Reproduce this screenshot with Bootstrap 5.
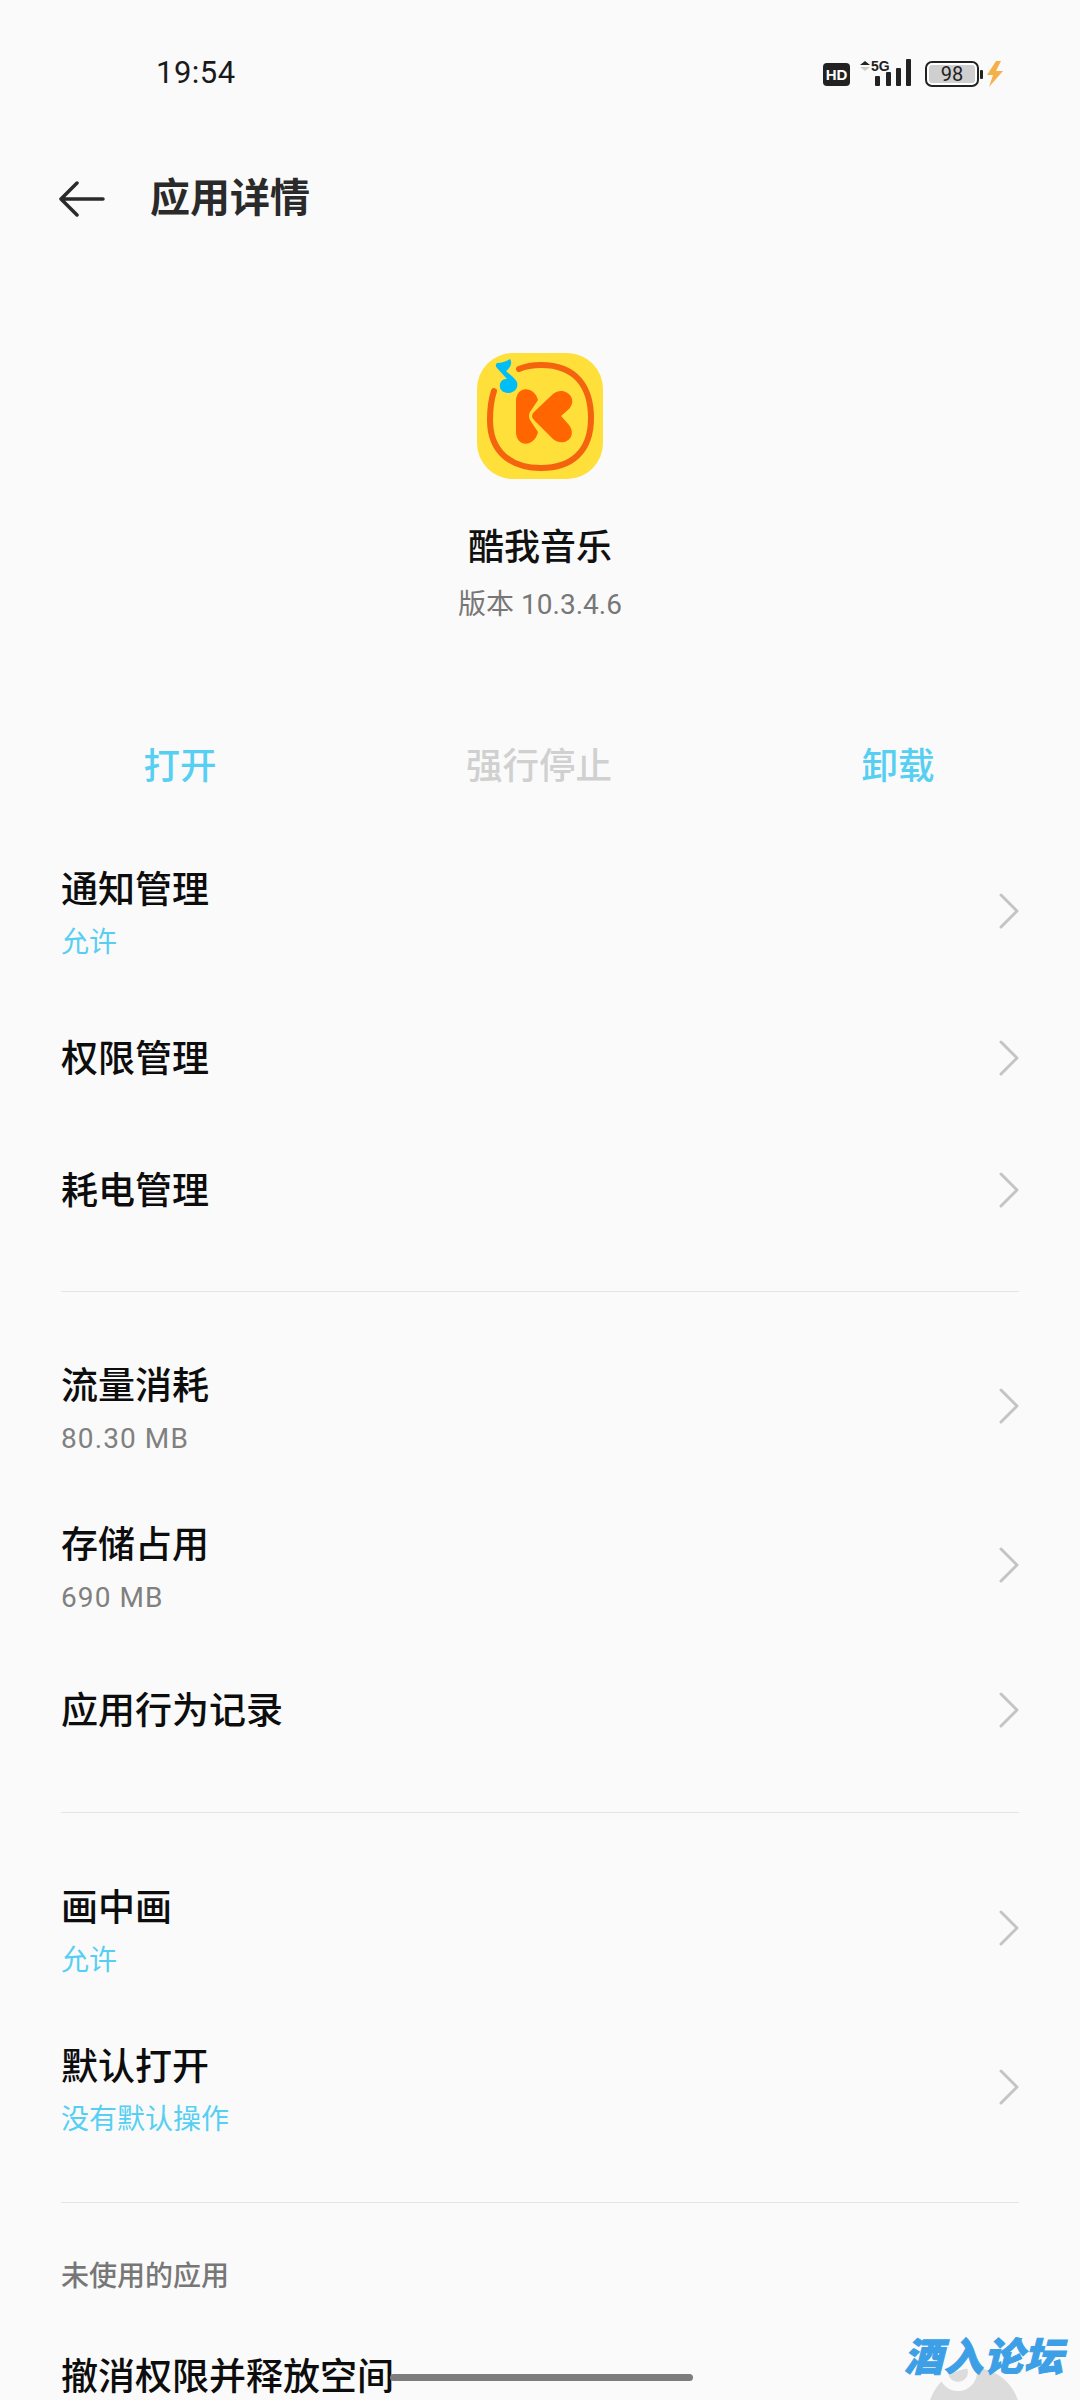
<!DOCTYPE html>
<html lang="zh-CN">
<head>
  <meta charset="UTF-8" />
  <meta name="viewport" content="width=device-width, initial-scale=1" />
  <title>应用详情</title>
  <link href="https://cdn.jsdelivr.net/npm/bootstrap@5.3.2/dist/css/bootstrap.min.css" rel="stylesheet" />
  <style>
    html, body { height: 2400px; overflow: hidden; }
    body {
      position: relative;
      background: #fafafa;
      color: #111;
      font-family: Roboto, "Noto Sans CJK SC", sans-serif;
    }
    .status-bar { height: 147px; padding: 0 69px 0 156px; }
    .status-time { font-size: 31px; color: #1a1a1a; letter-spacing: .5px; }
    .top-bar { height: 104px; padding-left: 59px; }
    .top-title { font-size: 40px; font-weight: 700; color: #2a2a2a; margin-left: 45px; line-height: 1; }
    .app-head { padding-top: 101px; }
    .app-name { font-size: 36px; font-weight: 500; line-height: 1; margin-top: 50px; }
    .app-ver { font-size: 28px; color: #777; line-height: 1; margin-top: 25px; }
    .action-row { margin-top: 118px; height: 60px; padding: 0 50px 0 48px; }
    .action-item { width: 264px; font-size: 36.5px; font-weight: 500; text-align: center; color: #56cff3; line-height: 1; }
    .action-off { color: #d0d0d0; }
    .set-list { padding: 0 61px; margin-top: 33px; }
    .set-row { background: transparent; border: 0; padding: 0; display: flex; align-items: center; justify-content: space-between; color: inherit; }
    .row-two { height: 159px; }
    .row-one { height: 132px; }
    .first-two { height: 162px; }
    .row-text { padding-top: 9px; }
    .first-two .row-text { padding-top: 6px; }
    .row-title { font-size: 37px; font-weight: 500; line-height: 1.3; color: #0d0d0d; }
    .row-one .row-title { padding-top: 5px; }
    .row-sub { font-size: 28px; line-height: 1.3; margin-top: 10px; color: #808080; }
    .row-sub.on { color: #56cff3; }
    .row-sub.num { letter-spacing: 1.1px; }
    .row-arrow { width: 22px; height: 36px; margin-right: -1px; }
    .set-line { border: 0; border-top: 1px solid #e4e4e4; opacity: 1; margin: 35px 0 34px; }
    .line-mid { margin-top: 36px; margin-bottom: 35px; }
    .line-end { margin-top: 36px; }
    .group-label { font-size: 28px; font-weight: 500; color: #777; line-height: 1; margin-top: 60px; }
    .last-title { font-size: 37px; font-weight: 500; line-height: 1; margin-top: 68px; white-space: nowrap; color: #0d0d0d; }
    .home-bar { position: absolute; left: 390px; top: 2374px; width: 303px; height: 7px; border-radius: 4px; background: #7d7d7d; }
    .mark-circle { position: absolute; left: 928px; top: 2368px; width: 92px; height: 92px; border-radius: 50%; background: #dcdcdc; }
    .mark-circle::after { content: ""; position: absolute; left: 11px; top: -15px; width: 38px; height: 38px; border-radius: 50%; border: 9px solid #fafafa; }
    .mark-text { position: absolute; left: 904px; top: 2339px; font-size: 39px; font-weight: 900; font-style: italic; line-height: 1; color: #3d9fe6; white-space: nowrap; letter-spacing: 1px; -webkit-text-stroke: 1px #3d9fe6; }
  </style>
</head>
<body>
  <!-- status bar -->
  <div class="status-bar d-flex align-items-center justify-content-between">
    <span class="status-time">19:54</span>
    <svg width="190" height="30" viewBox="0 0 190 30">
      <rect x="2" y="4" width="27" height="23" rx="4" fill="#222"/>
      <text x="15.5" y="21" font-family="Liberation Sans" font-size="15" font-weight="700" fill="#fff" text-anchor="middle">HD</text>
      <path d="M39 6l5-4 5 4z" fill="#222"/>
      <path d="M39 8l5 4 5-4z" fill="#ccc"/>
      <text x="50" y="12" font-family="Liberation Sans" font-size="14" font-weight="700" fill="#222">5G</text>
      <rect x="54" y="17" width="5" height="10" rx="1" fill="#222"/>
      <rect x="65" y="13" width="5" height="14" rx="1" fill="#222"/>
      <rect x="75" y="9" width="5" height="18" rx="1" fill="#222"/>
      <rect x="85" y="0" width="5" height="27" rx="1" fill="#222"/>
      <rect x="105" y="3" width="52" height="24" rx="6" fill="#fff" stroke="#222" stroke-width="2"/>
      <rect x="108" y="6" width="46" height="18" rx="3" fill="#cfcfcf"/>
      <text x="131" y="22" font-family="Roboto" font-size="20" fill="#222" text-anchor="middle">98</text>
      <rect x="159" y="11" width="3" height="9" rx="1" fill="#222"/>
      <path d="M175 2l-9 14h6l-4 12 14-16h-7l5-10z" fill="#f6b04a"/>
    </svg>
  </div>

  <!-- top bar -->
  <div class="top-bar d-flex align-items-center">
    <svg width="46" height="36" viewBox="0 0 46 36" fill="none" stroke="#2a2a2a" stroke-width="3.5" stroke-linecap="round" stroke-linejoin="round">
      <path d="M44 18H3M18 2L2 18l16 16"/>
    </svg>
    <span class="top-title">应用详情</span>
  </div>

  <!-- app head -->
  <div class="app-head d-flex flex-column align-items-center">
    <svg width="128" height="128" viewBox="0 0 128 128">
      <rect x="1" y="1" width="126" height="126" rx="36" fill="#ffdf3a"/>
      <path d="M43 17C50 14 58 13 65 13C100 13 115 35 115 66C115 100 95 116 65 116C35 116 14 100 14 68C14 58 15 48 18 39" fill="none" stroke="#f4640f" stroke-width="6" stroke-linecap="round"/>
      <path d="M40 49C40 34 58 33 62 48L54 60Q52 64 54 68L62 80C58 96 40 95 40 80z" fill="#ff6500"/>
      <path d="M58 60L77 42C88 33 103 46 93 57L85 64L93 73C102 85 88 96 77 87L58 68Q54 64 58 60z" fill="#ff6500"/>
      <path d="M21 11C26 11 31 9 34 7C37 11 34 16 30 19C33 22 38 25 41 30C43 37 37 41 32 41C26 41 23 37 24 32C25 28 28 27 31 27L21 16C19 14 20 12 21 11z" fill="#00bef5"/>
    </svg>
    <div class="app-name">酷我音乐</div>
    <div class="app-ver">版本 10.3.4.6</div>
  </div>

  <!-- actions -->
  <div class="action-row d-flex justify-content-between align-items-center">
    <span class="action-item">打开</span>
    <span class="action-item action-off">强行停止</span>
    <span class="action-item">卸载</span>
  </div>

  <div class="set-list">
    <div class="list-group list-group-flush">
      <div class="set-row first-two list-group-item">
        <div class="row-text"><div class="row-title">通知管理</div><div class="row-sub on">允许</div></div>
        <svg class="row-arrow" viewBox="0 0 22 36" fill="none" stroke="#c4c4c4" stroke-width="3" stroke-linecap="round" stroke-linejoin="round"><path d="M3 2l16 16L3 34"/></svg>
      </div>
      <div class="set-row row-one list-group-item">
        <div class="row-title">权限管理</div>
        <svg class="row-arrow" viewBox="0 0 22 36" fill="none" stroke="#c4c4c4" stroke-width="3" stroke-linecap="round" stroke-linejoin="round"><path d="M3 2l16 16L3 34"/></svg>
      </div>
      <div class="set-row row-one list-group-item">
        <div class="row-title">耗电管理</div>
        <svg class="row-arrow" viewBox="0 0 22 36" fill="none" stroke="#c4c4c4" stroke-width="3" stroke-linecap="round" stroke-linejoin="round"><path d="M3 2l16 16L3 34"/></svg>
      </div>
    </div>
    <hr class="set-line" />
    <div class="list-group list-group-flush">
      <div class="set-row row-two list-group-item">
        <div class="row-text"><div class="row-title">流量消耗</div><div class="row-sub num">80.30 MB</div></div>
        <svg class="row-arrow" viewBox="0 0 22 36" fill="none" stroke="#c4c4c4" stroke-width="3" stroke-linecap="round" stroke-linejoin="round"><path d="M3 2l16 16L3 34"/></svg>
      </div>
      <div class="set-row row-two list-group-item">
        <div class="row-text"><div class="row-title">存储占用</div><div class="row-sub num">690 MB</div></div>
        <svg class="row-arrow" viewBox="0 0 22 36" fill="none" stroke="#c4c4c4" stroke-width="3" stroke-linecap="round" stroke-linejoin="round"><path d="M3 2l16 16L3 34"/></svg>
      </div>
      <div class="set-row row-one list-group-item">
        <div class="row-title">应用行为记录</div>
        <svg class="row-arrow" viewBox="0 0 22 36" fill="none" stroke="#c4c4c4" stroke-width="3" stroke-linecap="round" stroke-linejoin="round"><path d="M3 2l16 16L3 34"/></svg>
      </div>
    </div>
    <hr class="set-line line-mid" />
    <div class="list-group list-group-flush">
      <div class="set-row row-two list-group-item">
        <div class="row-text"><div class="row-title">画中画</div><div class="row-sub on">允许</div></div>
        <svg class="row-arrow" viewBox="0 0 22 36" fill="none" stroke="#c4c4c4" stroke-width="3" stroke-linecap="round" stroke-linejoin="round"><path d="M3 2l16 16L3 34"/></svg>
      </div>
      <div class="set-row row-two list-group-item">
        <div class="row-text"><div class="row-title">默认打开</div><div class="row-sub on">没有默认操作</div></div>
        <svg class="row-arrow" viewBox="0 0 22 36" fill="none" stroke="#c4c4c4" stroke-width="3" stroke-linecap="round" stroke-linejoin="round"><path d="M3 2l16 16L3 34"/></svg>
      </div>
    </div>
    <hr class="set-line line-end" />
    <div class="group-label">未使用的应用</div>
    <div class="last-title">撤消权限并释放空间</div>
  </div>

  <!-- overlays: gesture bar and forum watermark -->
  <div class="mark-circle"></div>
  <div class="mark-text">酒入论坛</div>
  <div class="home-bar"></div>

  <script src="https://cdn.jsdelivr.net/npm/bootstrap@5.3.2/dist/js/bootstrap.bundle.min.js"></script>
</body>
</html>
